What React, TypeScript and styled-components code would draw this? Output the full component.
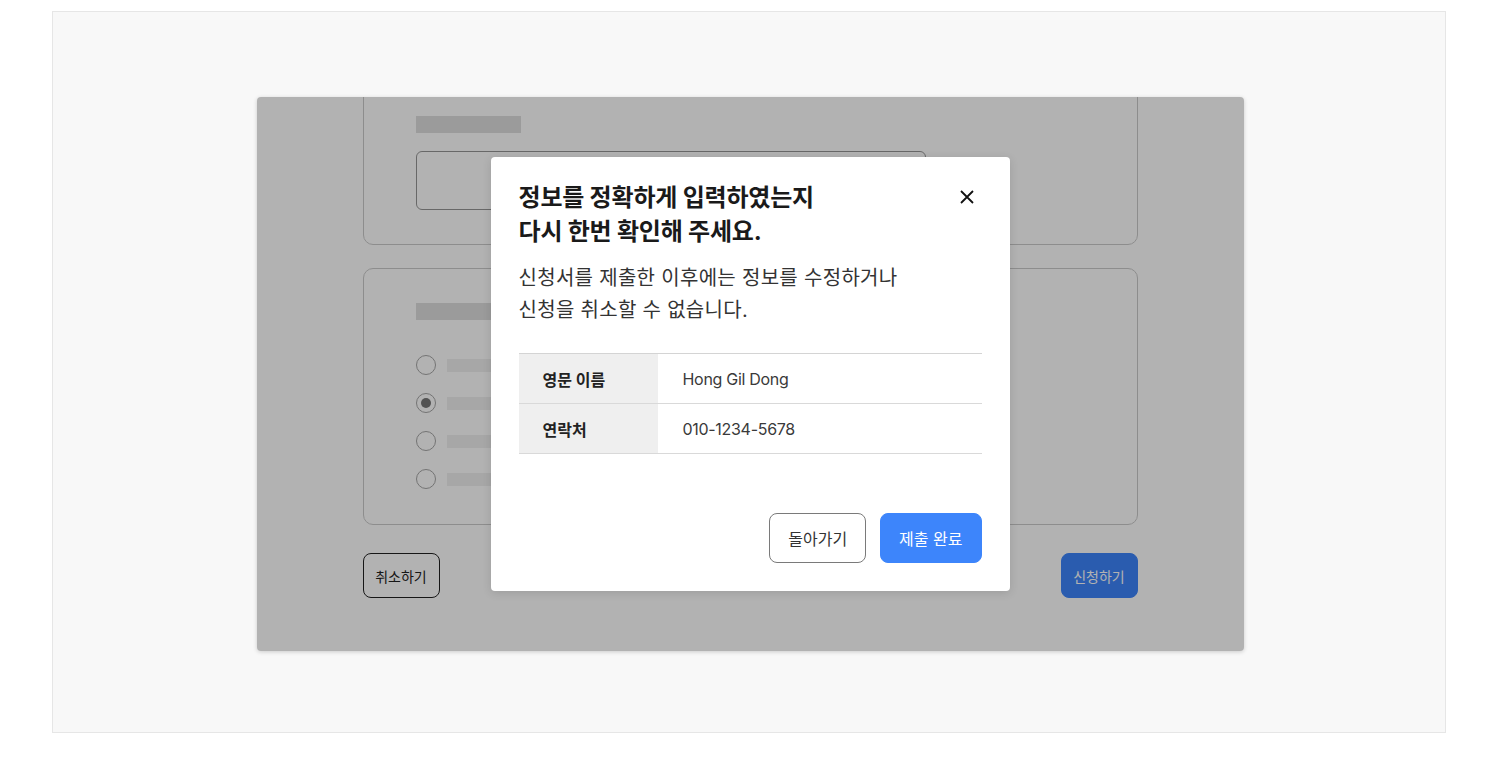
import styled, { createGlobalStyle } from "styled-components";

const GlobalStyle = createGlobalStyle`
  * {
    box-sizing: border-box;
  }
  body {
    margin: 0;
    background: #ffffff;
    font-family: Inter, "Noto Sans CJK KR", sans-serif;
  }
`;

const Frame = styled.div`
  width: 1394px;
  height: 722px;
  margin: 11px auto 0;
  padding: 4px 0 0 2px;
  background: #f8f8f8;
  border: 1px solid #e6e6e6;
  display: flex;
  align-items: center;
  justify-content: center;
`;

const Preview = styled.div`
  position: relative;
  width: 987px;
  height: 554px;
  background: #ffffff;
  border-radius: 4px;
  box-shadow: 0 1px 4px rgba(0, 0, 0, 0.18);
  overflow: hidden;
`;

const Form = styled.div`
  width: 775px;
  margin: -16px auto 0;
  display: flex;
  flex-direction: column;
  gap: 23px;
`;

const Card = styled.div<{ $bottom?: number }>`
  border: 1px solid #cbcbcb;
  border-radius: 10px;
  padding: 34px 52px ${(p) => p.$bottom ?? 34}px;
  display: flex;
  flex-direction: column;
`;

const LabelBar = styled.div`
  width: 105px;
  height: 17px;
  background: #dfdfdf;
`;

const InputBox = styled.div`
  width: 510px;
  height: 59px;
  margin-top: 18px;
  border: 1.5px solid #969696;
  border-radius: 6px;
`;

const RadioList = styled.div`
  margin-top: 35px;
  display: flex;
  flex-direction: column;
  gap: 18px;
`;

const RadioRow = styled.div`
  display: flex;
  align-items: center;
  gap: 11px;
`;

const Radio = styled.span<{ $checked?: boolean }>`
  width: 20px;
  height: 20px;
  border-radius: 50%;
  border: 1.5px solid #a6a6a6;
  display: flex;
  align-items: center;
  justify-content: center;

  &::after {
    content: "";
    width: 10px;
    height: 10px;
    border-radius: 50%;
    background: ${(p) => (p.$checked ? "#777777" : "transparent")};
  }
`;

const OptionBar = styled.div`
  width: 320px;
  height: 13px;
  background: #f0f0f0;
`;

const FormActions = styled.div`
  margin-top: 5px;
  display: flex;
  justify-content: space-between;
`;

const SmallButton = styled.button<{ $primary?: boolean }>`
  width: 77px;
  height: 45px;
  border-radius: 8px;
  font-family: inherit;
  font-size: 14px;
  border: 1px solid ${(p) => (p.$primary ? "#3d85fb" : "#222222")};
  background: ${(p) => (p.$primary ? "#3d85fb" : "#ffffff")};
  color: ${(p) => (p.$primary ? "#ffffff" : "#222222")};
`;

const Overlay = styled.div`
  position: absolute;
  inset: 0;
  background: rgba(0, 0, 0, 0.3);
  display: flex;
  align-items: center;
  justify-content: center;
`;

const Modal = styled.div`
  width: 519px;
  background: #ffffff;
  border-radius: 4px;
  padding: 24px 28px 28px;
  box-shadow: 0 2px 10px rgba(0, 0, 0, 0.12);
`;

const Header = styled.div`
  display: flex;
  justify-content: space-between;
  align-items: flex-start;
`;

const Title = styled.h2`
  margin: 0;
  font-size: 24px;
  line-height: 34px;
  font-weight: 700;
  color: #1a1a1a;
  letter-spacing: -0.2px;
`;

const CloseButton = styled.button`
  width: 24px;
  height: 24px;
  margin: 4px 3px 0 0;
  padding: 0;
  border: none;
  background: none;
  display: flex;
  align-items: center;
  justify-content: center;
  color: #111111;
`;

const Description = styled.p`
  margin: 13px 0 0;
  font-size: 20px;
  line-height: 32px;
  color: #333333;
  letter-spacing: 0.3px;
`;

const InfoTable = styled.div`
  margin-top: 27px;
  border-top: 1px solid #d4d4d4;
`;

const InfoRow = styled.div`
  display: flex;
  height: 50px;
  border-bottom: 1px solid #d9d9d9;
`;

const InfoLabel = styled.div`
  width: 139px;
  background: #efefef;
  padding-left: 24px;
  display: flex;
  align-items: center;
  font-size: 16px;
  font-weight: 700;
  color: #222222;
`;

const InfoValue = styled.div`
  flex: 1;
  padding-left: 25px;
  display: flex;
  align-items: center;
  font-size: 16px;
  color: #3a3a3a;
  letter-spacing: -0.3px;
`;

const ModalActions = styled.div`
  margin-top: 59px;
  display: flex;
  justify-content: flex-end;
  gap: 14px;
`;

const ModalButton = styled.button<{ $primary?: boolean }>`
  height: 50px;
  padding: 0 18px;
  border-radius: 8px;
  font-family: inherit;
  font-size: 16px;
  border: 1px solid ${(p) => (p.$primary ? "#3d85fb" : "#7a7a7a")};
  background: ${(p) => (p.$primary ? "#3d85fb" : "#ffffff")};
  color: ${(p) => (p.$primary ? "#ffffff" : "#333333")};
`;

const CloseIcon = () => (
  <svg width="16" height="16" viewBox="0 0 16 16" fill="none">
    <path d="M2 2L14 14M14 2L2 14" stroke="currentColor" strokeWidth="1.8" />
  </svg>
);

const options = [false, true, false, false];

export default function App() {
  return (
    <>
      <GlobalStyle />
      <Frame>
        <Preview>
          <Form>
            <Card>
              <LabelBar />
              <InputBox />
            </Card>
            <Card $bottom={35}>
              <LabelBar />
              <RadioList>
                {options.map((checked, i) => (
                  <RadioRow key={i}>
                    <Radio $checked={checked} />
                    <OptionBar />
                  </RadioRow>
                ))}
              </RadioList>
            </Card>
            <FormActions>
              <SmallButton>취소하기</SmallButton>
              <SmallButton $primary>신청하기</SmallButton>
            </FormActions>
          </Form>
          <Overlay>
            <Modal>
              <Header>
                <Title>
                  정보를 정확하게 입력하였는지
                  <br />
                  다시 한번 확인해 주세요.
                </Title>
                <CloseButton aria-label="닫기">
                  <CloseIcon />
                </CloseButton>
              </Header>
              <Description>
                신청서를 제출한 이후에는 정보를 수정하거나
                <br />
                신청을 취소할 수 없습니다.
              </Description>
              <InfoTable>
                <InfoRow>
                  <InfoLabel>영문 이름</InfoLabel>
                  <InfoValue>Hong Gil Dong</InfoValue>
                </InfoRow>
                <InfoRow>
                  <InfoLabel>연락처</InfoLabel>
                  <InfoValue>010-1234-5678</InfoValue>
                </InfoRow>
              </InfoTable>
              <ModalActions>
                <ModalButton>돌아가기</ModalButton>
                <ModalButton $primary>제출 완료</ModalButton>
              </ModalActions>
            </Modal>
          </Overlay>
        </Preview>
      </Frame>
    </>
  );
}
